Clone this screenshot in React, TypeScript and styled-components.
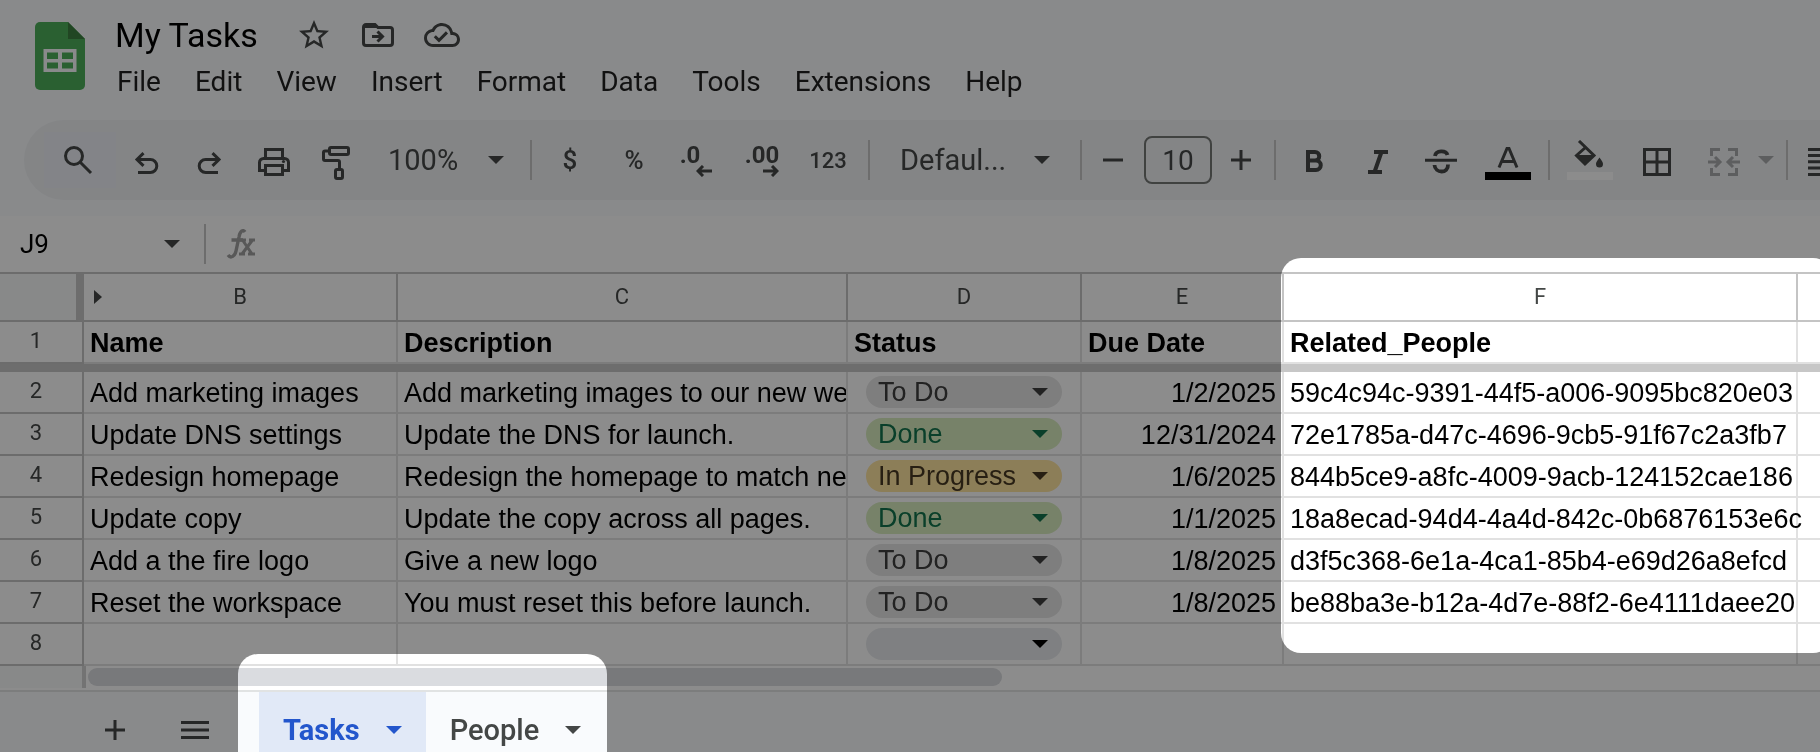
import React from 'react';
import styled, { createGlobalStyle } from 'styled-components';
import { MdOutlineCloudDone, MdStarBorder } from 'react-icons/md';

const ui = `Roboto, "Liberation Sans", sans-serif`;
const sheet = `"Liberation Sans", Arial, sans-serif`;
const line = '#c4c4c4';
const gridLine = '#e1e1e1';
const ink = '#444746';

const Global = createGlobalStyle`
  *, *::before, *::after { box-sizing: border-box; }
  body { margin: 0; background: #fff; font-family: ${ui}; }
  button, input, select { margin: 0; padding: 0; border: 0; background: none; font: inherit; color: inherit; }
  select { appearance: none; }
  svg { display: block; flex: none; }
`;

const Page = styled.div`
  position: relative;
  display: flex;
  flex-direction: column;
  height: 100vh;
  overflow: hidden;
  background: #fff;
`;

/* ---------- header ---------- */
const Top = styled.div`
  flex: none;
  padding: 14px 0 16px;
  background: #f9fbfd;
`;
const Header = styled.header`
  display: flex;
  align-items: flex-start;
  gap: 30px;
  padding-left: 35px;
`;
const Logo = styled.svg`
  margin-top: 8px;
`;
const TitleRow = styled.div`
  display: flex;
  align-items: center;
  height: 42px;
`;
const Title = styled.h1`
  margin: 0 36px 0 0;
  font: 400 34px/42px ${ui};
  color: #000;
`;
const TitleButton = styled.button`
  display: flex;
  align-items: center;
  justify-content: center;
  width: 64px;
  height: 40px;
  color: ${ink};
  &:first-of-type { width: 40px; margin-right: 12px; }
`;
const Menu = styled.nav`
  display: flex;
  align-items: center;
  gap: 34px;
  height: 50px;
  padding: 2px 0 0 2px;
`;
const MenuItem = styled.button`
  font-size: 28px;
  line-height: 40px;
  color: #1f1f1f;
`;

/* ---------- toolbar ---------- */
const Toolbar = styled.div`
  display: flex;
  align-items: center;
  height: 80px;
  margin: 14px 0 0 24px;
  padding-left: 20px;
  overflow: hidden;
  border-radius: 40px 0 0 40px;
  background: #f0f2f5;
  color: ${ink};
`;
const Tool = styled.button<{ $w: number; $size?: number; $lit?: boolean }>`
  display: flex;
  flex: none;
  align-items: center;
  justify-content: center;
  width: ${(p) => p.$w}px;
  height: 56px;
  font-size: ${(p) => p.$size ?? 26}px;
  font-weight: 500;
  background: ${(p) => (p.$lit ? '#eef1f8' : 'transparent')};
`;
const WideTool = styled(Tool)`
  justify-content: flex-start;
  gap: 18px;
  padding-left: 24px;
  color: #a9abad;
`;
const Divider = styled.span<{ $gap?: number }>`
  flex: none;
  width: 2px;
  height: 40px;
  margin-left: ${(p) => p.$gap ?? 0}px;
  background: #c7c7c7;
`;
const Picker = styled.span<{ $w: number; $start: number; $end: number }>`
  position: relative;
  display: flex;
  flex: none;
  align-items: center;
  width: ${(p) => p.$w}px;
  height: 56px;
  font-size: 29px;
  select { width: 100%; height: 100%; padding-left: ${(p) => p.$start}px; }
  svg { position: absolute; right: ${(p) => p.$end}px; pointer-events: none; }
`;
const SizeBox = styled.input`
  flex: none;
  width: 68px;
  height: 48px;
  border: 2px solid #747775;
  border-radius: 8px;
  font-size: 28px;
  text-align: center;
`;
const Decimal = styled.span`
  display: grid;
  justify-items: end;
  font: 700 24px/20px ${ui};
  padding-top: 2px;
  span { margin-right: 12px; }
  &[data-more] span { margin-right: 0; }
`;

/* ---------- formula bar ---------- */
const FormulaBar = styled.div`
  display: flex;
  flex: none;
  align-items: center;
  height: 58px;
  padding-left: 20px;
  border-bottom: 2px solid ${line};
`;
const NameBox = styled.input`
  width: 144px;
  height: 40px;
  font-size: 26px;
  color: #000;
`;
const NameCaret = styled.button`
  margin-right: 24px;
  padding: 8px 0;
  color: ${ink};
`;
const Formula = styled.input`
  flex: 1;
  height: 40px;
`;
const Fx = styled.svg`
  margin: 0 20px;
  height: 34px;
`;

/* ---------- grid ---------- */
const Grid = styled.table`
  flex: none;
  width: 100%;
  table-layout: fixed;
  border-collapse: separate;
  border-spacing: 0;
  tr > :last-child { border-right: 0; }
`;
const ColHead = styled.th`
  height: 48px;
  padding: 0;
  border-right: 2px solid ${line};
  border-bottom: 2px solid ${line};
  font: 400 22px/26px ${ui};
  color: ${ink};
`;
const Corner = styled(ColHead)`
  border-right: 8px solid #c7c7c7;
  background: #f8faf9;
`;
const ColLabel = styled.div`
  display: grid;
  grid-template-columns: 1fr auto 1fr;
  align-items: center;
  padding: 0 10px;
`;
const RowHead = styled.th`
  height: 42px;
  padding: 0 10px 2px 0;
  border-right: 2px solid ${line};
  border-bottom: 2px solid ${line};
  font: 400 22px/26px ${ui};
  color: ${ink};
`;
const Cell = styled.td<{ $bold?: boolean; $right?: boolean; $spill?: boolean }>`
  height: 42px;
  padding: 2px 6px 0;
  border-right: 2px solid ${gridLine};
  border-bottom: 2px solid ${gridLine};
  overflow: ${(p) => (p.$spill ? 'visible' : 'hidden')};
  white-space: nowrap;
  font: ${(p) => (p.$bold ? 700 : 400)} 27px/32px ${sheet};
  text-align: ${(p) => (p.$right ? 'right' : 'left')};
  color: #000;
`;
const ChipCell = styled(Cell)`
  padding: 0 18px;
`;
const Freeze = styled.td`
  height: 8px;
  padding: 0;
  background: #c7c7c7;
`;
const Chip = styled.span<{ $bg: string; $fg: string }>`
  display: flex;
  align-items: center;
  position: relative;
  height: 32px;
  border-radius: 16px;
  background: ${(p) => p.$bg};
  color: ${(p) => p.$fg};
  select { width: 100%; height: 32px; padding-left: 12px; border-radius: 16px; }
  svg { position: absolute; right: 14px; pointer-events: none; }
`;

/* ---------- bottom ---------- */
const ScrollRow = styled.div`
  display: flex;
  flex: none;
  height: 24px;
`;
const ScrollCorner = styled.div`
  width: 86px;
  height: 22px;
  border-right: 4px solid #d2d2d2;
  background: #f8f9fa;
`;
const Thumb = styled.div`
  width: 914px;
  height: 18px;
  margin: 2px 0 0 2px;
  border-radius: 9px;
  background: #dadce0;
`;
const TabBar = styled.div`
  display: flex;
  flex: none;
  align-items: stretch;
  height: 78px;
  padding-left: 83px;
  border-top: 2px solid #e1e3e3;
  background: #f9fbfd;
  color: ${ink};
`;
const BarButton = styled.button`
  display: flex;
  align-items: center;
  justify-content: center;
  width: 64px;
  &:nth-of-type(2) { width: 96px; margin-right: 16px; }
`;
const Tab = styled.button<{ $active?: boolean }>`
  display: flex;
  align-items: center;
  gap: 26px;
  padding: 0 24px;
  font-size: 29px;
  font-weight: ${(p) => (p.$active ? 700 : 500)};
  color: ${(p) => (p.$active ? '#2356cc' : ink)};
  background: ${(p) => (p.$active ? '#e1e9f7' : 'transparent')};
`;

/* ---------- tour overlay: multiplies the page, white areas stay lit ---------- */
const Shade = styled.div`
  position: absolute;
  inset: 0;
  overflow: hidden;
  background: #8c8c8c;
  mix-blend-mode: multiply;
  pointer-events: none;
`;
const Spot = styled.div<{ $x: number; $y: number; $w: number; $h: number }>`
  position: absolute;
  left: ${(p) => p.$x}px;
  top: ${(p) => p.$y}px;
  width: ${(p) => p.$w}px;
  height: ${(p) => p.$h}px;
  border-radius: 20px;
  background: #fff;
`;

/* ---------- icons ---------- */
const Caret = () => (
  <svg width="16" height="8" viewBox="0 0 16 8" fill="currentColor"><path d="M0 0H16L8 8Z" /></svg>
);
const Icon = ({ children, w = 40 }: { children: React.ReactNode; w?: number }) => (
  <svg width={w} height="40" viewBox={`0 0 ${w} 40`} fill="none" stroke="currentColor" strokeWidth="3">
    {children}
  </svg>
);
const SearchIcon = () => (
  <Icon><circle cx="14" cy="16" r="8.500" /><path d="M20 22L31 33" /></Icon>
);
const UndoIcon = () => (
  <Icon><path d="M17.500 13.200L11 19.500L17.500 25.800M11 19.500H24.300A6.500 6.500 0 0 1 24.300 32.500H12" /></Icon>
);
const RedoIcon = () => (
  <Icon><path d="M23.500 13.200L30 19.500L23.500 25.800M30 19.500H16.700A6.500 6.500 0 0 0 16.700 32.500H29" /></Icon>
);
const PrintIcon = () => (
  <Icon>
    <path d="M11.500 18V9.500H28.500V18M10 30.500H5.500V22.500A4 4 0 0 1 9.500 18.500H30.500A4 4 0 0 1 34.500 22.500V30.500H30" />
    <path d="M11.500 25.500H28.500V34.500H11.500Z" />
    <circle cx="29.500" cy="21.500" r="1.600" fill="currentColor" stroke="none" />
  </Icon>
);
const RollerIcon = () => (
  <Icon>
    <rect x="12.500" y="7.500" width="19" height="7" rx="1.500" />
    <path d="M12 11H8A1.500 1.500 0 0 0 6.500 12.500V19A1.500 1.500 0 0 0 8 20.500H21A1.500 1.500 0 0 1 22.500 22V29" />
    <rect x="18.500" y="29.500" width="7" height="9" rx="1.500" />
  </Icon>
);
const MinusIcon = () => <Icon><path d="M10 20H30" /></Icon>;
const PlusIcon = () => <Icon><path d="M10 20H30M20 10V30" /></Icon>;
const BoldIcon = () => (
  <Icon>
    <path d="M14 12H21A4.200 4.200 0 0 1 21 20.500H14M14 20.500H22A4.700 4.700 0 0 1 22 30H14M14 10V32" strokeWidth="4" />
  </Icon>
);
const ItalicIcon = () => (
  <Icon><path d="M16 12H30M10 32H24M23.500 12L16.500 32" strokeWidth="4" /></Icon>
);
const StrikeIcon = () => (
  <Icon>
    <path d="M4 20.300H36" />
    <path d="M14 16C15 10 25 10 26.500 15M13.500 25C14 33.500 27.500 34 27 24.500" strokeWidth="3.800" />
  </Icon>
);
const TextColorIcon = () => (
  <Icon w={46}>
    <path d="M14 27.500L22 8.500H24L32 27.500M17 21.500H29" />
    <path d="M0 36H46" stroke="#000" strokeWidth="8" />
  </Icon>
);
const FillIcon = () => (
  <Icon w={46}>
    <path d="M12 1L27 15.500L18 24L9.500 15.500L19 7" />
    <path d="M8.500 15H27.500L18 25Z" fill="currentColor" stroke="none" />
    <path d="M32.500 17.500C35 21 36 22.500 36 24A3.500 3.500 0 0 1 29 24C29 22.500 30 21 32.500 17.500Z" fill="currentColor" stroke="none" />
    <path d="M0 36H46" stroke="#fff" strokeWidth="8" />
  </Icon>
);
const BordersIcon = () => (
  <Icon><path d="M7.500 9.500H32.500V34.500H7.500ZM7.500 22H32.500M20 9.500V34.500" /></Icon>
);
const MergeIcon = () => (
  <svg width="32" height="40" viewBox="0 0 32 40" fill="none" stroke="currentColor" strokeWidth="3">
    <path d="M3.500 16V9.500H12M20 9.500H28.500V16M3.500 28V34.500H12M20 34.500H28.500V28" />
    <path d="M0 22H11M7 17L12 22L7 27M32 22H21M25 17L20 22L25 27" />
  </svg>
);
const AlignIcon = () => (
  <Icon w={28}><path d="M0 9.500H28M0 15.500H18M0 21.800H28M0 28H18M0 34.500H28" /></Icon>
);
const Arrow = ({ back }: { back?: boolean }) => (
  <svg width="16" height="12" viewBox="0 0 16 12" fill="none" stroke="currentColor" strokeWidth="3">
    <path d={back ? 'M16 6H2M7 1L2 6L7 11' : 'M0 6H14M9 1L14 6L9 11'} />
  </svg>
);

/* ---------- data ---------- */
const tones = {
  'To Do': ['#e6e6e6', '#3d3d3d'],
  Done: ['#d9edbf', '#11734b'],
  'In Progress': ['#ffe5a0', '#473821'],
  '': ['#e8eaed', '#000'],
} as const;
type Status = keyof typeof tones;

const rows: [string, string, Status, string, string][] = [
  ['Add marketing images', 'Add marketing images to our new website.', 'To Do', '1/2/2025', '59c4c94c-9391-44f5-a006-9095bc820e03'],
  ['Update DNS settings', 'Update the DNS for launch.', 'Done', '12/31/2024', '72e1785a-d47c-4696-9cb5-91f67c2a3fb7'],
  ['Redesign homepage', 'Redesign the homepage to match new brand.', 'In Progress', '1/6/2025', '844b5ce9-a8fc-4009-9acb-124152cae186'],
  ['Update copy', 'Update the copy across all pages.', 'Done', '1/1/2025', '18a8ecad-94d4-4a4d-842c-0b6876153e6c'],
  ['Add a the fire logo', 'Give a new logo', 'To Do', '1/8/2025', 'd3f5c368-6e1a-4ca1-85b4-e69d26a8efcd'],
  ['Reset the workspace', 'You must reset this before launch.', 'To Do', '1/8/2025', 'be88ba3e-b12a-4d7e-88f2-6e4111daee20'],
  ['', '', '', '', ''],
];
const menus = ['File', 'Edit', 'View', 'Insert', 'Format', 'Data', 'Tools', 'Extensions', 'Help'];

export default function App() {
  return (
    <Page>
      <Global />
      <Top>
        <Header>
          <Logo width="50" height="68" viewBox="0 0 50 68" role="img" aria-label="Sheets">
            <path d="M5 0H33L50 17V63A5 5 0 0 1 45 68H5A5 5 0 0 1 0 63V5A5 5 0 0 1 5 0Z" fill="#4cae59" />
            <path d="M33 0L50 17H33Z" fill="#3c8040" />
            <path fillRule="evenodd" fill="#f9fbfd" d="M8.500 27H41.500V50H8.500ZM12 30.500H23V37H12ZM27 30.500H38V37H27ZM12 40.500H23V46.500H12ZM27 40.500H38V46.500H27Z" />
          </Logo>
          <div>
            <TitleRow>
              <Title>My Tasks</Title>
              <TitleButton aria-label="Star"><MdStarBorder size={36} /></TitleButton>
              <TitleButton aria-label="Move">
                <svg width="32" height="24" viewBox="0 0 32 24" fill="none" stroke="currentColor" strokeWidth="3">
                  <path d="M1.500 4V20A2.500 2.500 0 0 0 4 22.500H28A2.500 2.500 0 0 0 30.500 20V7A2.500 2.500 0 0 0 28 4.500H16L13 1.500H4A2.500 2.500 0 0 0 1.500 4Z" />
                  <path d="M2 2H13L16 5H2Z" fill="currentColor" stroke="none" />
                  <path d="M10 13.500H20M15.500 8.500L20.500 13.500L15.500 18.500" />
                </svg>
              </TitleButton>
              <TitleButton aria-label="Saved"><MdOutlineCloudDone size={36} /></TitleButton>
            </TitleRow>
            <Menu>
              {menus.map((m) => <MenuItem key={m}>{m}</MenuItem>)}
            </Menu>
          </div>
        </Header>
        <Toolbar role="toolbar">
          <Tool $w={72} $lit aria-label="Search"><SearchIcon /></Tool>
          <Tool $w={60} aria-label="Undo"><UndoIcon /></Tool>
          <Tool $w={66} aria-label="Redo"><RedoIcon /></Tool>
          <Tool $w={64} aria-label="Print"><PrintIcon /></Tool>
          <Tool $w={62} aria-label="Paint format"><RollerIcon /></Tool>
          <Picker $w={162} $start={20} $end={26}>
            <select aria-label="Zoom"><option>100%</option></select><Caret />
          </Picker>
          <Divider />
          <Tool $w={76}>$</Tool>
          <Tool $w={52}>%</Tool>
          <Tool $w={72} aria-label="Fewer decimals"><Decimal><span>.0</span><Arrow back /></Decimal></Tool>
          <Tool $w={60} aria-label="More decimals"><Decimal data-more=""><span>.00</span><Arrow /></Decimal></Tool>
          <Tool $w={72} $size={22}>123</Tool>
          <Divider $gap={4} />
          <Picker $w={210} $start={30} $end={30}>
            <select aria-label="Font"><option>Defaul...</option></select><Caret />
          </Picker>
          <Divider />
          <Tool $w={62} aria-label="Decrease size"><MinusIcon /></Tool>
          <SizeBox aria-label="Font size" defaultValue="10" />
          <Tool $w={58} aria-label="Increase size"><PlusIcon /></Tool>
          <Divider $gap={4} />
          <Tool $w={76} aria-label="Bold"><BoldIcon /></Tool>
          <Tool $w={52} aria-label="Italic"><ItalicIcon /></Tool>
          <Tool $w={74} aria-label="Strikethrough"><StrikeIcon /></Tool>
          <Tool $w={60} aria-label="Text color"><TextColorIcon /></Tool>
          <Divider $gap={10} />
          <Tool $w={80} aria-label="Fill color"><FillIcon /></Tool>
          <Tool $w={54} aria-label="Borders"><BordersIcon /></Tool>
          <WideTool $w={102} aria-label="Merge cells"><MergeIcon /><Caret /></WideTool>
          <Divider />
          <Tool $w={68} aria-label="Align"><AlignIcon /></Tool>
        </Toolbar>
      </Top>

      <FormulaBar>
        <NameBox aria-label="Cell" defaultValue="J9" />
        <NameCaret aria-label="Named ranges"><Caret /></NameCaret>
        <Divider />
        <Fx width="30" viewBox="0 0 30 34" fill="none" stroke="#a0a0a0" strokeWidth="3" aria-hidden="true">
          <path d="M2 28C5 32 9 29 10 24L13 10C14 4 17 2 19 5M5.500 13H17" strokeWidth="3.400" />
          <path d="M14 13H20M23 13H29M13 27H19M22 27H29M16.500 13L26 27M26.500 13L16 27" />
        </Fx>
        <Formula aria-label="Formula" />
      </FormulaBar>

      <Grid>
        <colgroup>
          <col style={{ width: 84 }} />
          <col style={{ width: 314 }} />
          <col style={{ width: 450 }} />
          <col style={{ width: 234 }} />
          <col style={{ width: 202 }} />
          <col style={{ width: 514 }} />
          <col />
        </colgroup>
        <thead>
          <tr>
            <Corner />
            <ColHead>
              <ColLabel>
                <svg width="8" height="14" viewBox="0 0 8 14" fill={ink}><path d="M0 0L8 7L0 14Z" /></svg>
                B
              </ColLabel>
            </ColHead>
            {['C', 'D', 'E', 'F', ''].map((c) => <ColHead key={c}>{c}</ColHead>)}
          </tr>
        </thead>
        <tbody>
          <tr>
            <RowHead>1</RowHead>
            {['Name', 'Description', 'Status', 'Due Date', 'Related_People', ''].map((h) => (
              <Cell key={h} $bold>{h}</Cell>
            ))}
          </tr>
          <tr><Freeze colSpan={7} /></tr>
          {rows.map(([name, desc, status, due, id], i) => (
            <tr key={i}>
              <RowHead>{i + 2}</RowHead>
              <Cell>{name}</Cell>
              <Cell>{desc}</Cell>
              <ChipCell>
                <Chip $bg={tones[status][0]} $fg={tones[status][1]}>
                  <select aria-label={`Status of row ${i + 2}`} defaultValue={status}>
                    <option>{status}</option>
                  </select>
                  <Caret />
                </Chip>
              </ChipCell>
              <Cell $right>{due}</Cell>
              <Cell $spill>{id}</Cell>
              <Cell />
            </tr>
          ))}
        </tbody>
      </Grid>

      <ScrollRow><ScrollCorner /><Thumb /></ScrollRow>

      <TabBar>
        <BarButton aria-label="Add sheet">
          <svg width="20" height="20" viewBox="0 0 20 20" stroke="currentColor" strokeWidth="3"><path d="M0 10H20M10 0V20" /></svg>
        </BarButton>
        <BarButton aria-label="All sheets">
          <svg width="28" height="18" viewBox="0 0 28 18" stroke="currentColor" strokeWidth="3"><path d="M0 1.500H28M0 9H28M0 16.500H28" /></svg>
        </BarButton>
        <Tab $active>Tasks<Caret /></Tab>
        <Tab>People<Caret /></Tab>
      </TabBar>

      <Shade>
        <Spot $x={1281} $y={258} $w={552} $h={395} />
        <Spot $x={238} $y={654} $w={369} $h={140} />
      </Shade>
    </Page>
  );
}
